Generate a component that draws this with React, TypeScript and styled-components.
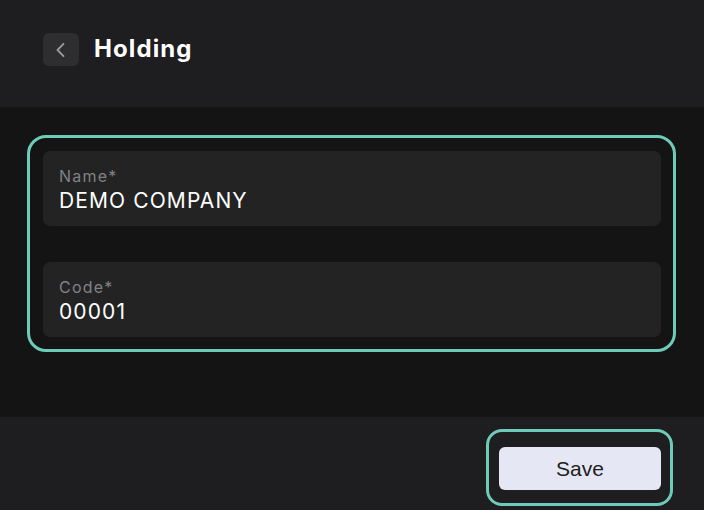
import * as React from "react";
import styled, { createGlobalStyle } from "styled-components";

const GlobalStyle = createGlobalStyle`
  html, body {
    margin: 0;
    padding: 0;
    background: #141414;
  }
  * {
    box-sizing: border-box;
  }
`;

const Page = styled.div`
  width: 704px;
  height: 510px;
  display: flex;
  flex-direction: column;
  background: #141414;
  font-family: Inter, "Noto Sans", sans-serif;
`;

const Header = styled.header`
  height: 107px;
  background: #1e1e20;
  display: flex;
  align-items: flex-start;
  padding: 33px 0 0 43px;
  gap: 15px;
`;

const BackButton = styled.button`
  width: 36px;
  height: 33px;
  border: 0;
  border-radius: 6px;
  background: #2e2e31;
  color: #9c9ca1;
  display: flex;
  align-items: center;
  justify-content: center;
  padding: 0;
`;

const Title = styled.h1`
  margin: 0;
  font-size: 24px;
  line-height: 32px;
  font-weight: 700;
  color: #ffffff;
  letter-spacing: 1.1px;
`;

const Body = styled.main`
  flex: 1;
  padding: 28px 28px 0 27px;
`;

const FocusBox = styled.div`
  border: 3px solid #6fcbb9;
  border-radius: 19px;
  padding: 13px 12px 12px 13px;
  display: flex;
  flex-direction: column;
  gap: 36px;
`;

const Field = styled.div`
  height: 75px;
  background: #232323;
  border-radius: 7px;
  padding: 14px 16px 0;
  display: flex;
  flex-direction: column;
`;

const Label = styled.label`
  font-size: 16px;
  line-height: 22px;
  color: #828286;
  letter-spacing: 1.2px;
`;

const Value = styled.div`
  font-size: 21px;
  line-height: 27px;
  color: #ffffff;
  letter-spacing: 1.1px;
`;

const Footer = styled.footer`
  height: 93px;
  background: #1e1e20;
  display: flex;
  justify-content: flex-end;
  align-items: flex-start;
  padding: 12px 31px 0 0;
`;

const SaveRing = styled.div`
  border: 3px solid #6fcbb9;
  border-radius: 16px;
  padding: 15px 9px 13px 10px;
`;

const SaveButton = styled.button`
  width: 162px;
  height: 43px;
  border: 0;
  border-radius: 6px;
  background: #e6e7f4;
  color: #1e1e20;
  font-family: "Liberation Sans", Arial, sans-serif;
  font-size: 21px;
  line-height: 40px;
  padding: 0;
`;

const fields = [
  { label: "Name*", value: "DEMO COMPANY" },
  { label: "Code*", value: "00001" },
];

export default function App() {
  return (
    <Page>
      <GlobalStyle />
      <Header>
        <BackButton aria-label="Back">
          <svg width="16" height="16" viewBox="0 0 16 16" fill="none">
            <path
              d="M10.5 1.8L4.5 8L10.5 14.2"
              stroke="currentColor"
              strokeWidth="1.8"
              strokeLinecap="round"
              strokeLinejoin="round"
            />
          </svg>
        </BackButton>
        <Title>Holding</Title>
      </Header>
      <Body>
        <FocusBox>
          {fields.map((f) => (
            <Field key={f.label}>
              <Label>{f.label}</Label>
              <Value>{f.value}</Value>
            </Field>
          ))}
        </FocusBox>
      </Body>
      <Footer>
        <SaveRing>
          <SaveButton>Save</SaveButton>
        </SaveRing>
      </Footer>
    </Page>
  );
}
